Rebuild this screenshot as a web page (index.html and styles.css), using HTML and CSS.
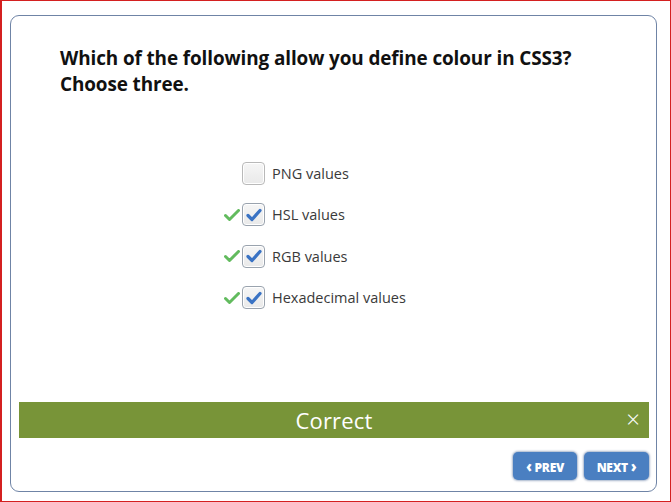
FILE: index.html
```html
<!DOCTYPE html>
<html>
<head>
<meta charset="utf-8">
<link rel="stylesheet" href="styles.css">
</head>
<body>
<div class="frame">
  <div class="card">
    <h1 class="question">Which of the following allow you define colour in CSS3?<br>Choose three.</h1>
    <ul class="options">
      <li class="option">
        <span class="mark"></span>
        <span class="box"></span>
        <span class="label">PNG values</span>
      </li>
      <li class="option">
        <span class="mark"><svg viewBox="0 0 16 12" width="16" height="12"><path d="M1.5 6.5 L5.5 10.5 L14.5 1.5" fill="none" stroke="#62bb5e" stroke-width="3" stroke-linecap="round" stroke-linejoin="round"/></svg></span>
        <span class="box checked"><svg viewBox="0 0 16 14" width="16" height="14"><path d="M2 7.5 L6 11.5 L14 2.5" fill="none" stroke="#3a73c4" stroke-width="3.2" stroke-linecap="round" stroke-linejoin="round"/></svg></span>
        <span class="label">HSL values</span>
      </li>
      <li class="option">
        <span class="mark"><svg viewBox="0 0 16 12" width="16" height="12"><path d="M1.5 6.5 L5.5 10.5 L14.5 1.5" fill="none" stroke="#62bb5e" stroke-width="3" stroke-linecap="round" stroke-linejoin="round"/></svg></span>
        <span class="box checked"><svg viewBox="0 0 16 14" width="16" height="14"><path d="M2 7.5 L6 11.5 L14 2.5" fill="none" stroke="#3a73c4" stroke-width="3.2" stroke-linecap="round" stroke-linejoin="round"/></svg></span>
        <span class="label">RGB values</span>
      </li>
      <li class="option">
        <span class="mark"><svg viewBox="0 0 16 12" width="16" height="12"><path d="M1.5 6.5 L5.5 10.5 L14.5 1.5" fill="none" stroke="#62bb5e" stroke-width="3" stroke-linecap="round" stroke-linejoin="round"/></svg></span>
        <span class="box checked"><svg viewBox="0 0 16 14" width="16" height="14"><path d="M2 7.5 L6 11.5 L14 2.5" fill="none" stroke="#3a73c4" stroke-width="3.2" stroke-linecap="round" stroke-linejoin="round"/></svg></span>
        <span class="label">Hexadecimal values</span>
      </li>
    </ul>
    <div class="spacer"></div>
    <div class="feedback">
      <span class="feedback-text">Correct</span>
      <span class="close">×</span>
    </div>
    <div class="nav">
      <button class="btn"><span class="chev">‹</span> PREV</button>
      <button class="btn">NEXT <span class="chev">›</span></button>
    </div>
  </div>
</div>
</body>
</html>
```
FILE: styles.css
```css
* { box-sizing: border-box; }
html, body { margin: 0; padding: 0; background: #fff; }
body { font-family: "Open Sans", "Liberation Sans", sans-serif; }
.frame {
  width: 671px;
  height: 502px;
  border: 1px solid #d42020;
  border-left-width: 2px;
  padding: 14px 13px 9px 8px;
}
.card {
  height: 100%;
  border: 1px solid #6f84a6;
  border-radius: 9px;
  display: flex;
  flex-direction: column;
  padding: 0 7px 11px 8px;
}
.question {
  margin: 29px 0 0 41px;
  font-size: 18.9px;
  line-height: 26px;
  font-weight: 700;
  color: #111;
  letter-spacing: -0.1px;
}
.options {
  list-style: none;
  margin: 65px 0 0 205px;
  padding: 0;
  display: flex;
  flex-direction: column;
  gap: 18.4px;
}
.option {
  display: flex;
  align-items: center;
  height: 23px;
}
.mark {
  width: 18px;
  height: 12px;
  display: flex;
  align-items: center;
}
.box {
  width: 23px;
  height: 23px;
  border: 1px solid #b9b9b9;
  border-radius: 4px;
  background: linear-gradient(#f6f6f6, #e9e9e9);
  display: flex;
  align-items: center;
  justify-content: center;
  box-shadow: inset 0 0 0 1px #fff;
}
.box.checked { border-color: #9aa3ae; }
.label {
  margin-left: 7px;
  font-size: 14.5px;
  color: #3a3a3a;
}
.spacer { flex: 1; }
.feedback {
  height: 36px;
  background: #789438;
  position: relative;
  display: flex;
  align-items: center;
  justify-content: center;
  color: #fff;
}
.feedback-text {
  font-size: 22px;
  font-weight: 400;
  letter-spacing: 0.2px;
}
.close {
  position: absolute;
  right: 9px;
  top: 4px;
  font-size: 24px;
  font-weight: 300;
  line-height: 26px;
}
.nav {
  display: flex;
  justify-content: flex-end;
  gap: 7px;
  margin-top: 14px;
}
.btn {
  height: 28px;
  width: 64px;
  border: 0;
  border-radius: 5px;
  background: #4a7fc1;
  color: #fff;
  font-family: "Open Sans", sans-serif;
  font-weight: 800;
  font-size: 12px;
  letter-spacing: -0.3px;
  box-shadow: 0 0 2px 1px rgba(60, 90, 140, 0.45);
  padding: 0;
}
.btn:last-child { width: 65px; }
.chev { font-weight: 800; font-size: 15px; }
```
